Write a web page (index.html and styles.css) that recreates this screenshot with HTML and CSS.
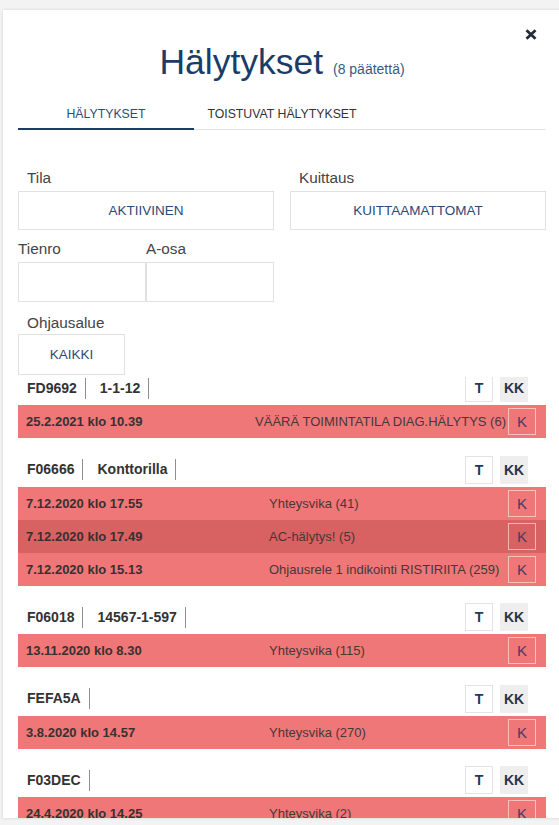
FILE: index.html
```html
<!DOCTYPE html>
<html lang="fi">
<head>
<meta charset="utf-8">
<title>Hälytykset</title>
<link rel="stylesheet" href="styles.css">
</head>
<body>
<div class="modal">
  <button class="close" aria-label="Sulje">
    <svg width="12" height="11" viewBox="0 0 12 11"><path d="M1.5 1.2 L10.5 9.8 M10.5 1.2 L1.5 9.8" stroke="#272c38" stroke-width="2.8" stroke-linecap="butt"/></svg>
  </button>
  <div class="head">
    <h1 class="title">Hälytykset <span class="count">(8 päätettä)</span></h1>
    <div class="tabs">
      <div class="tab active">HÄLYTYKSET</div>
      <div class="tab">TOISTUVAT HÄLYTYKSET</div>
    </div>
    <div class="filters">
      <div class="frow two">
        <div class="field"><div class="label ind">Tila</div><div class="btn wide">AKTIIVINEN</div></div>
        <div class="field"><div class="label ind">Kuittaus</div><div class="btn wide">KUITTAAMATTOMAT</div></div>
      </div>
      <div class="frow two r2">
        <div class="pair">
          <div class="field"><div class="label">Tienro</div><div class="input"></div></div>
          <div class="field"><div class="label">A-osa</div><div class="input"></div></div>
        </div>
      </div>
      <div class="frow r3">
        <div class="field"><div class="label ind">Ohjausalue</div><div class="btn small">KAIKKI</div></div>
      </div>
    </div>
  </div>
  <div class="list">
    <div class="list-inner">
      <div class="group">
        <div class="ghead">
          <span class="tag">FD9692</span><span class="tag">1-1-12</span>
          <div class="acts"><span class="abtn t">T</span><span class="abtn kk">KK</span></div>
        </div>
        <div class="alarm"><span class="date">25.2.2021 klo 10.39</span><span class="msg">VÄÄRÄ TOIMINTATILA DIAG.HÄLYTYS (6)</span><span class="kbtn">K</span></div>
      </div>
      <div class="group">
        <div class="ghead">
          <span class="tag">F06666</span><span class="tag">Konttorilla</span>
          <div class="acts"><span class="abtn t">T</span><span class="abtn kk">KK</span></div>
        </div>
        <div class="alarm"><span class="date">7.12.2020 klo 17.55</span><span class="msg">Yhteysvika (41)</span><span class="kbtn">K</span></div>
        <div class="alarm dark"><span class="date">7.12.2020 klo 17.49</span><span class="msg">AC-hälytys! (5)</span><span class="kbtn">K</span></div>
        <div class="alarm"><span class="date">7.12.2020 klo 15.13</span><span class="msg">Ohjausrele 1 indikointi RISTIRIITA (259)</span><span class="kbtn">K</span></div>
      </div>
      <div class="group">
        <div class="ghead">
          <span class="tag">F06018</span><span class="tag">14567-1-597</span>
          <div class="acts"><span class="abtn t">T</span><span class="abtn kk">KK</span></div>
        </div>
        <div class="alarm"><span class="date">13.11.2020 klo 8.30</span><span class="msg">Yhteysvika (115)</span><span class="kbtn">K</span></div>
      </div>
      <div class="group">
        <div class="ghead">
          <span class="tag">FEFA5A</span>
          <div class="acts"><span class="abtn t">T</span><span class="abtn kk">KK</span></div>
        </div>
        <div class="alarm"><span class="date">3.8.2020 klo 14.57</span><span class="msg">Yhteysvika (270)</span><span class="kbtn">K</span></div>
      </div>
      <div class="group">
        <div class="ghead">
          <span class="tag">F03DEC</span>
          <div class="acts"><span class="abtn t">T</span><span class="abtn kk">KK</span></div>
        </div>
        <div class="alarm"><span class="date">24.4.2020 klo 14.25</span><span class="msg">Yhteysvika (2)</span><span class="kbtn">K</span></div>
      </div>
    </div>
  </div>
</div>
</body>
</html>
```
FILE: styles.css
```css
html, body {
  margin: 0;
  padding: 0;
  background: #f3f3f3;
  overflow: hidden;
}
body {
  font-family: "Liberation Sans", Arial, sans-serif;
  color: #333;
  width: 559px;
  height: 825px;
}
.modal {
  position: relative;
  margin: 10px 0 0 3px;
  width: 558px;
  height: 808px;
  background: #fff;
  box-shadow: 0 0 3px rgba(0, 0, 0, 0.14);
  display: flex;
  flex-direction: column;
  overflow: hidden;
}
.close {
  position: absolute;
  top: 19px;
  right: 24px;
  border: 0;
  background: none;
  padding: 0;
  width: 12px;
  height: 11px;
  display: block;
}
.close svg { display: block; }
.head {
  padding: 30px 15px 0;
  flex: none;
}
.title {
  margin: 0;
  text-align: center;
  font-weight: normal;
  font-size: 35.5px;
  line-height: 44px;
  color: #1b3c69;
}
.count {
  font-size: 14px;
  color: #3b5883;
}
.tabs {
  margin-top: 9px;
  display: flex;
  border-bottom: 1px solid #e4e4e4;
}
.tab {
  width: 176px;
  text-align: center;
  font-size: 12.3px;
  line-height: 14px;
  padding: 7px 0 8px;
  color: #333;
}
.tab.active {
  color: #2c4b77;
  border-bottom: 2px solid #1f3c64;
  margin-bottom: -1px;
  padding-bottom: 7px;
}
.filters {
  margin-top: 39px;
}
.frow.two {
  display: grid;
  grid-template-columns: 1fr 1fr;
  column-gap: 16px;
}
.frow.r2 { margin-top: 10px; }
.frow.r3 { margin-top: 12px; }
.label {
  font-size: 15.3px;
  line-height: 18px;
  color: #444;
  margin-bottom: 4px;
}
.label.ind { padding-left: 9px; }
.r3 .label { margin-bottom: 2px; }
.btn {
  box-sizing: border-box;
  border: 1px solid #e1e1e1;
  display: flex;
  align-items: center;
  justify-content: center;
  font-size: 13.5px;
  color: #2c4a77;
}
.btn.wide { height: 39px; }
.btn.small { height: 41px; width: 107px; }
.pair {
  display: grid;
  grid-template-columns: 1fr 1fr;
}
.input {
  box-sizing: border-box;
  height: 40px;
  border: 1px solid #e1e1e1;
}
.list {
  flex: 1;
  min-height: 0;
  overflow: hidden;
  margin-top: 2px;
  padding: 0 15px;
}
.list-inner {
  margin-top: -3px;
}
.group {
  margin-bottom: 17.5px;
}
.ghead {
  display: flex;
  align-items: center;
  height: 28px;
  margin-bottom: 3px;
}
.tag {
  font-weight: bold;
  font-size: 14px;
  line-height: 21px;
  color: #333;
  padding-right: 8px;
  border-right: 1px solid #8e8e8e;
}
.tag:first-child { margin-left: 9px; }
.tag + .tag { margin-left: 14px; }
.acts {
  margin-left: auto;
  margin-right: 18px;
  display: flex;
  gap: 7px;
}
.abtn {
  box-sizing: border-box;
  width: 28px;
  height: 28px;
  display: flex;
  align-items: center;
  justify-content: center;
  font-weight: bold;
  font-size: 14px;
}
.abtn.t {
  border: 1px solid #e3e3e3;
  color: #1d3a63;
  background: #fff;
}
.abtn.kk {
  background: #eeeeee;
  color: #2b3443;
}
.alarm {
  display: flex;
  align-items: center;
  height: 33px;
  padding: 0 10px 0 8px;
  background: #f07777;
}
.alarm.dark {
  background: #d86161;
}
.date {
  flex: 0 1 243px;
  min-width: 0;
  white-space: nowrap;
  overflow: hidden;
  font-weight: bold;
  font-size: 13px;
  color: #383030;
}
.msg {
  flex: 1 0 auto;
  margin-right: 2px;
  white-space: nowrap;
  font-size: 13px;
  color: #463838;
}
.kbtn {
  flex: none;
  box-sizing: border-box;
  width: 28px;
  height: 27px;
  border: 1px solid rgba(255, 255, 255, 0.55);
  display: flex;
  align-items: center;
  justify-content: center;
  font-size: 15px;
  color: #483a68;
}
```
